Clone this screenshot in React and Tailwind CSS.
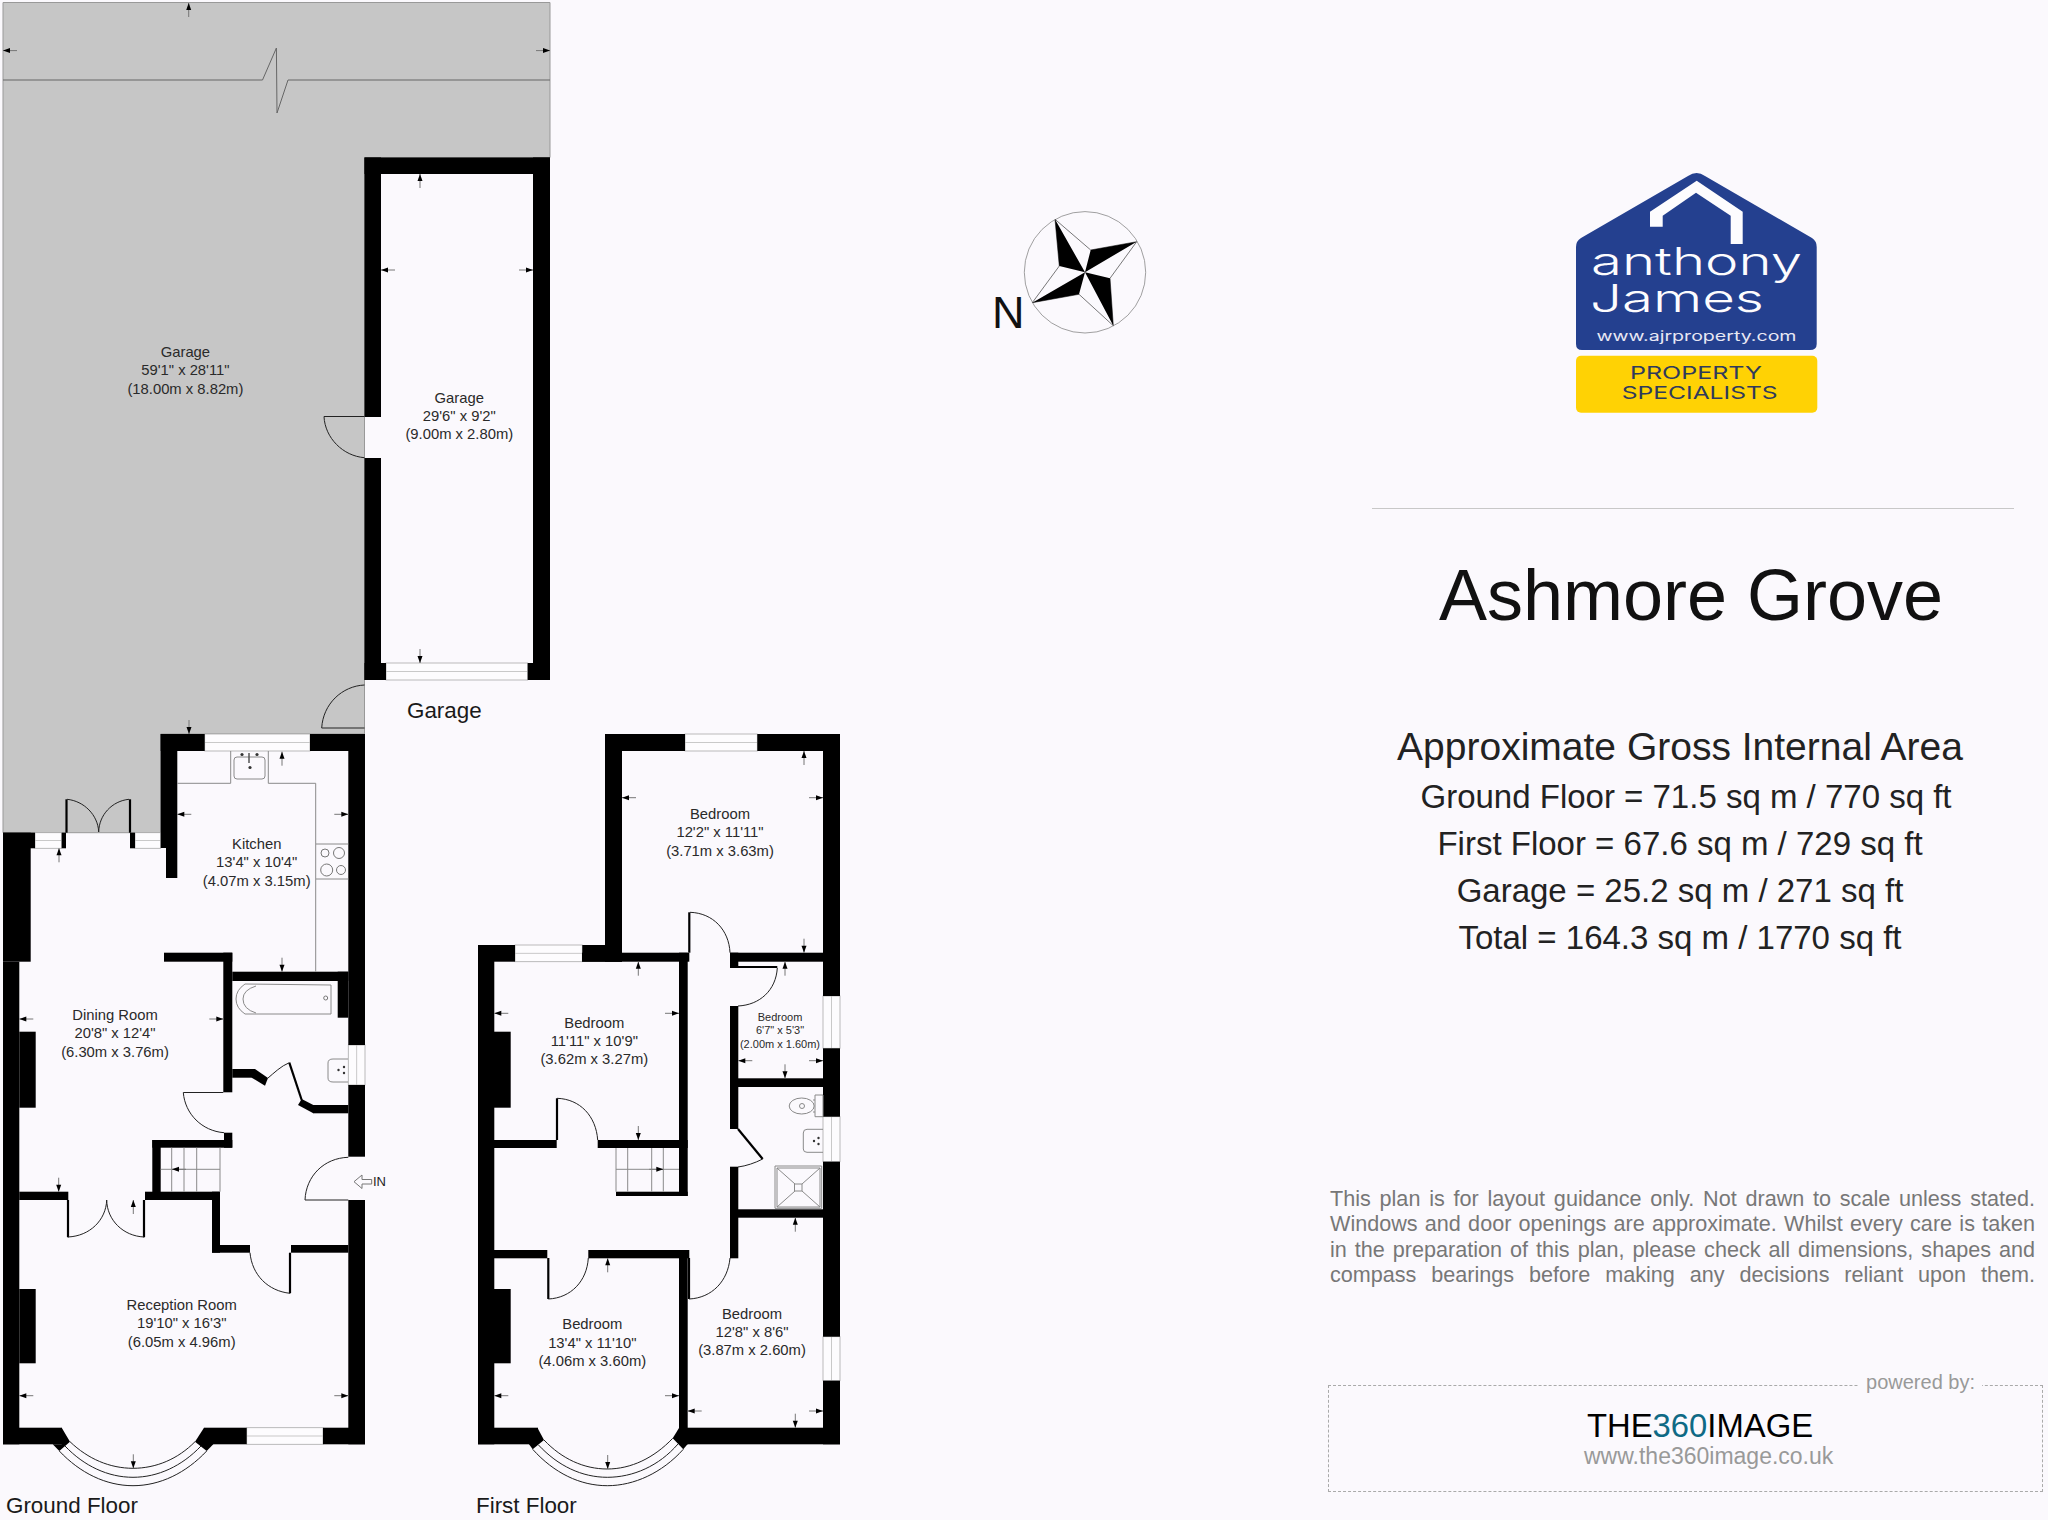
import React from "react";

// outer walls and partitions, [x1, y1, x2, y2]
const walls = [
  // detached garage
  [364.5, 157.5, 550, 174], [364.5, 157.5, 381, 417], [364.5, 458, 381, 680], [533, 157.5, 550, 680],
  [364.5, 663, 386, 680], [527.7, 663, 550, 680],
  // ground floor
  [160.7, 734, 204.7, 751], [310, 734, 365, 751], [160.7, 734, 177.3, 848], [166, 848, 177.3, 878],
  [348.3, 734, 365, 1045], [337.7, 971.7, 348.3, 1017.7], [232.3, 971.7, 348.3, 981],
  [3, 832.7, 35, 848.3], [3, 832.7, 30.7, 961.7], [3, 961.7, 19.3, 1444.3], [19.3, 1031.7, 35.7, 1107.7],
  [19.3, 1289, 35.7, 1363.3], [61.7, 832.7, 66, 848.3], [130, 832.7, 135, 848.3],
  [164, 952.7, 232.3, 961.7], [223.3, 952.7, 232.3, 1092.3], [232.3, 1069, 252, 1077.7],
  [313, 1105, 348.3, 1113.3], [348.3, 1085, 365, 1156.7], [348.3, 1200, 365, 1444.3],
  [224, 1132.7, 232.3, 1147.7], [152.3, 1140, 232.3, 1147.7], [152.3, 1140, 160.7, 1200],
  [145, 1191.7, 220, 1200], [212, 1191.7, 220, 1252.7], [212, 1245, 250, 1252.7], [291, 1245, 348.3, 1252.7],
  [19.3, 1191.7, 68.3, 1200], [3, 1427.7, 62, 1444.3], [204, 1427.7, 246.7, 1444.3], [323, 1427.7, 365, 1444.3],
  // first floor
  [605, 734, 685, 751], [757.3, 734, 840, 751], [605, 734, 622, 961.7], [823, 734, 840, 996],
  [823, 1048.3, 840, 1116.7], [823, 1161.7, 840, 1336.7], [823, 1380.7, 840, 1444.3],
  [478, 945, 515, 961.7], [582.3, 945, 622, 961.7], [478, 945, 494.3, 1444.3],
  [494, 1031.7, 510.7, 1107.7], [494, 1289, 510.7, 1363.3], [582, 952.7, 689.3, 961.7],
  [730, 952.7, 823, 961.7], [730, 952.7, 738.3, 968], [730, 1006, 738.3, 1129], [738, 1078.3, 823, 1087],
  [679, 952.7, 687.7, 1196], [616, 1191.7, 687.7, 1196], [494, 1140, 556.7, 1148], [597.7, 1140, 687.7, 1148],
  [494, 1250, 547.3, 1258.3], [588.3, 1250, 689.3, 1258.3], [679, 1250, 687.7, 1444.3],
  [730, 1166.7, 738.3, 1258.3], [738, 1209.3, 823, 1217.7], [478, 1427.7, 538, 1444.3], [686.7, 1427.7, 840, 1444.3],
];

// [x1, y1, x2, y2], lines run along the longer side
const windows = [
  [386, 663, 527.7, 680], [204.7, 734, 310, 751], [35, 832.7, 61.7, 848.3], [135, 832.7, 160.7, 848.3],
  [348.3, 1045, 365, 1085], [246.7, 1427.7, 323, 1444.3], [685, 734, 757.3, 751], [515, 945, 582.3, 961.7],
  [823, 996, 840, 1048.3], [823, 1116.7, 840, 1161.7], [823, 1336.7, 840, 1380.7],
];

// angled wall pieces and bay piers
const polys = [
  "251.7,1069 255,1069 268,1078 265,1085.7 251.7,1077.7",
  "298,1105 301.7,1099 313.3,1105 313.3,1113.3",
  "61.7,1427.7 70,1441.7 59.3,1451 52.7,1444.3 61.7,1444.3",
  "204,1427.7 213.3,1444.3 206.7,1451 195,1441.7",
  "537.7,1428.3 544,1440 532.7,1449.3 528.3,1443.3",
  "679,1428 687.7,1428 687.7,1444 683.3,1449.3 672.7,1438.3",
];

// thin arcs and door leaves
const doors = [
  "M324 416.5H364.5M324 416.5C325 438 343 456 364.5 457.7",
  "M321.7 728H364.5M321.7 728C323 704 342 686 364.5 685",
  "M183.3 1092.5H223.3M183.3 1092.5C185 1114 202 1131 224 1132.7",
  "M268 1078C274 1073 281 1066 289.3 1062.7",
  "M68 1237C90 1236 106 1220 106.7 1200M144 1237C123 1236 107 1220 106.7 1200",
  "M250 1252.7C252 1275 268 1291 290 1293.3",
  "M348.3 1157.3C324 1158 306 1176 305 1200H348.3",
  "M67 799.3C84 801 98 815 98.7 832M129 799.3C112 801 99 815 98.7 832",
  "M690 912.3C713 913 729 930 730 952.7",
  "M777.3 968C776 990 760 1005 738 1006",
  "M557 1098.3C580 1099 596 1116 597.7 1140",
  "M548.3 1299C571 1298 587 1281 588.3 1258",
  "M689 1299C712 1298 728 1281 730 1258",
  "M762.7 1159C755 1163 746 1166 738 1167",
  "M70 1441.7C88 1459 110 1468.3 133 1468.3C156 1468.3 178 1459 195 1441.7",
  "M65 1446C84 1466 108 1477.3 133 1477.3C158 1477.3 182 1466 201 1446",
  "M59.3 1451C80 1473 106 1485.7 133 1485.7C160 1485.7 186 1473 206.7 1451",
  "M544 1440C562 1459 584 1469 607.3 1469C631 1469 654 1458 672.7 1438.3",
  "M538.5 1445C558 1466 582 1477.3 607.3 1477.3C633 1477.3 659 1466 678 1444",
  "M532.7 1449.3C554 1473 580 1485.7 607.3 1485.7C634 1485.7 662 1473 683.3 1449.3",
];

const leaves = [
  [66.5, 799.3, 66.5, 832.7], [130, 799.3, 130, 832.7], [289.3, 1062.7, 301.7, 1100], [68, 1200, 68, 1237.3],
  [144, 1200, 144, 1237.3], [290, 1252.7, 290, 1293.3], [689.3, 912.3, 689.3, 952.7], [738, 967, 777.3, 967],
  [557, 1098.3, 557, 1140], [548.3, 1258, 548.3, 1299], [689, 1258, 689, 1299], [738, 1129, 762.7, 1159],
];

// gray fixture lines
const fixtures = [
  "M177.3 783.3H230.7M268.3 783.3H315.7V971.7M230.7 751V783.3M268.3 751V783.3",
  "M316 844H348.3M316 879H348.3",
  "M171.7 1147.7V1191.7M184 1147.7V1191.7M196.7 1147.7V1191.7M220 1147.7V1191.7M160.7 1169.3H220",
  "M616 1148V1191.7M627.7 1148V1191.7M651.7 1148V1191.7M663.3 1148V1191.7M616 1169.3H679",
  "M245 984L331 985V1014L245 1014Q236 1008 236 999Q236 990 245 984Z",
  "M256 986Q243 990 243 999Q243 1009 256 1013",
  "M348 1059H333Q328 1059 328 1063V1078Q328 1082 333 1082H348",
  "M823 1129.3H807Q803.3 1129.3 803.3 1133V1149Q803.3 1152.3 807 1152.3H823",
  "M775 1166H821.7V1208.3H775ZM777 1168H820V1207H777ZM777 1168L795 1184M820 1168L802 1184M777 1207L795 1191M820 1207L802 1191",
  "M794.5 1184H802V1191H794.5Z",
  "M815 1095H823V1116.7H815ZM813 1100H815M813 1112H815",
  "M234 760Q234 757 237 757H262Q265 757 265 760V776Q265 779 262 779H237Q234 779 234 776Z",
];

// tip sits on the wall, the tail runs back into the room
const arrows = [
  [188.7, 3, "u"], [3, 50.6, "l"], [550, 50.6, "r"], [420, 174, "u"], [381, 270, "l"], [533, 270, "r"], [420, 663, "d"],
  [189, 734, "d"], [282, 751.7, "u"], [282, 971.7, "d"], [177.3, 814.3, "l"], [348.3, 814.3, "r"],
  [59, 848.3, "u"], [19.3, 1019, "l"], [223.3, 1019, "r"], [58.7, 1191.7, "d"], [133.3, 1200, "u"],
  [172, 1169.3, "l"], [19.3, 1395.7, "l"], [348.3, 1395.7, "r"], [133.3, 1468.3, "d"],
  [804, 751, "u"], [622, 797.7, "l"], [823, 797.7, "r"], [804, 952.7, "d"],
  [638.3, 961.7, "u"], [494.3, 1013.3, "l"], [679, 1013.3, "r"], [638.3, 1140, "d"],
  [785, 961.7, "u"], [738.3, 1060.7, "l"], [823, 1060.7, "r"], [785, 1078.3, "d"],
  [795.3, 1217.7, "u"], [687.7, 1411, "l"], [823, 1411, "r"], [795.3, 1427.7, "d"],
  [607.7, 1258.3, "u"], [494.3, 1395.7, "l"], [679, 1395.7, "r"], [607.7, 1469, "d"], [663.3, 1169.3, "r"],
];

const rooms = [
  { x: 185.4, y: 357, lines: ["Garage", "59'1\" x 28'11\"", "(18.00m x 8.82m)"] },
  { x: 459.3, y: 402.7, lines: ["Garage", "29'6\" x 9'2\"", "(9.00m x 2.80m)"] },
  { x: 256.7, y: 849, lines: ["Kitchen", "13'4\" x 10'4\"", "(4.07m x 3.15m)"] },
  { x: 115, y: 1020, lines: ["Dining Room", "20'8\" x 12'4\"", "(6.30m x 3.76m)"] },
  { x: 181.7, y: 1310, lines: ["Reception Room", "19'10\" x 16'3\"", "(6.05m x 4.96m)"] },
  { x: 720, y: 819, lines: ["Bedroom", "12'2\" x 11'11\"", "(3.71m x 3.63m)"] },
  { x: 594.3, y: 1027.7, lines: ["Bedroom", "11'11\" x 10'9\"", "(3.62m x 3.27m)"] },
  { x: 592.3, y: 1329.3, lines: ["Bedroom", "13'4\" x 11'10\"", "(4.06m x 3.60m)"] },
  { x: 752, y: 1318.7, lines: ["Bedroom", "12'8\" x 8'6\"", "(3.87m x 2.60m)"] },
];

const disclaimer = [
  "This plan is for layout guidance only. Not drawn to scale unless stated.",
  "Windows and door openings are approximate. Whilst every care is taken",
  "in the preparation of this plan, please check all dimensions, shapes and",
  "compass bearings before making any decisions reliant upon them.",
];

function Arrow({ x, y, d }) {
  const dx = d === "l" ? 1 : d === "r" ? -1 : 0;
  const dy = d === "u" ? 1 : d === "d" ? -1 : 0;
  const px = dy * 2.5;
  const py = dx * 2.5;
  return (
    <g>
      <line x1={x} y1={y} x2={x + dx * 14} y2={y + dy * 14} stroke="#777" strokeWidth="1" />
      <polygon
        points={`${x},${y} ${x + dx * 7 + px},${y + dy * 7 + py} ${x + dx * 7 - px},${y + dy * 7 - py}`}
        fill="#000"
      />
    </g>
  );
}

function WindowFrame({ w }) {
  const [x1, y1, x2, y2] = w;
  const horizontal = x2 - x1 > y2 - y1;
  const mid = horizontal ? (y1 + y2) / 2 : (x1 + x2) / 2;
  return (
    <g>
      <rect x={x1} y={y1} width={x2 - x1} height={y2 - y1} fill="#fdfcfe" stroke="#aaa" strokeWidth="0.8" />
      {horizontal ? (
        <line x1={x1} y1={mid} x2={x2} y2={mid} stroke="#bbb" strokeWidth="0.8" />
      ) : (
        <line x1={mid} y1={y1} x2={mid} y2={y2} stroke="#bbb" strokeWidth="0.8" />
      )}
    </g>
  );
}

function Plan() {
  return (
    <svg viewBox="0 0 1328 1520" className="block w-[1328px] h-[1520px] shrink-0 font-['Liberation_Sans',sans-serif]">
      {/* garden */}
      <path d="M3 2.5H550V157.5H364.5V734H160.7V832.7H3Z" fill="#c6c6c6" stroke="#999" strokeWidth="1" />
      <path d="M3 80H262.5L276.4 48L277 113L288 80H550" fill="none" stroke="#666" strokeWidth="1" />

      {windows.map((w, i) => <WindowFrame key={i} w={w} />)}
      {walls.map((r, i) => (
        <rect key={i} x={r[0]} y={r[1]} width={r[2] - r[0]} height={r[3] - r[1]} fill="#000" />
      ))}
      {polys.map((p, i) => <polygon key={i} points={p} fill="#000" />)}
      {leaves.map((l, i) => (
        <line key={i} x1={l[0]} y1={l[1]} x2={l[2]} y2={l[3]} stroke="#000" strokeWidth="2.2" />
      ))}
      {doors.map((d, i) => <path key={i} d={d} fill="none" stroke="#222" strokeWidth="1" />)}
      {fixtures.map((d, i) => <path key={i} d={d} fill="none" stroke="#8a8a8a" strokeWidth="1" />)}

      {/* hob */}
      <g fill="none" stroke="#777" strokeWidth="1">
        <circle cx="325" cy="853" r="4" />
        <circle cx="339" cy="853" r="5.5" />
        <circle cx="326.7" cy="870" r="6" />
        <circle cx="341" cy="870" r="4.5" />
      </g>
      {/* sink taps, basin taps, bath overflow, toilet */}
      <g fill="#333">
        <circle cx="242" cy="754.5" r="1.6" />
        <circle cx="257" cy="754.5" r="1.6" />
        <circle cx="250" cy="767.5" r="1.6" />
        <circle cx="338.5" cy="1070" r="1.2" />
        <circle cx="344" cy="1067" r="1.2" />
        <circle cx="344" cy="1073" r="1.2" />
        <circle cx="814" cy="1141" r="1.2" />
        <circle cx="818.5" cy="1138" r="1.2" />
        <circle cx="818.5" cy="1144" r="1.2" />
      </g>
      <path d="M249 753V763" stroke="#555" strokeWidth="1.5" />
      <circle cx="325.7" cy="998" r="2" fill="none" stroke="#777" />
      <ellipse cx="801.7" cy="1106" rx="12.5" ry="8" fill="none" stroke="#888" />
      <circle cx="802" cy="1106" r="2.5" fill="none" stroke="#888" />

      {arrows.map((a, i) => <Arrow key={i} x={a[0]} y={a[1]} d={a[2]} />)}

      {/* front door marker */}
      <path d="M354 1181.7L362 1175V1179.5H371.7V1184H362V1188.5Z" fill="none" stroke="#777" strokeWidth="1" />
      <text x="373" y="1186" fill="#222" className="text-[13px]">IN</text>

      {rooms.map((room, i) => (
        <text key={i} textAnchor="middle" fill="#2a2a2a" className="text-[14.8px]">
          {room.lines.map((line, j) => (
            <tspan key={j} x={room.x} y={room.y + j * 18.3}>{line}</tspan>
          ))}
        </text>
      ))}
      <text textAnchor="middle" fill="#2a2a2a" className="text-[11px]">
        <tspan x="780" y="1021">Bedroom</tspan>
        <tspan x="780" y="1034.3">6'7" x 5'3"</tspan>
        <tspan x="780" y="1047.7">(2.00m x 1.60m)</tspan>
      </text>

      <text x="407" y="718" fill="#1a1a1a" className="text-[22.4px]">Garage</text>
      <text x="6" y="1512.7" fill="#1a1a1a" className="text-[22.4px]">Ground Floor</text>
      <text x="476" y="1512.7" fill="#1a1a1a" className="text-[22.4px]">First Floor</text>

      {/* compass */}
      <circle cx="1085" cy="272.3" r="60.7" fill="none" stroke="#888" strokeWidth="0.8" />
      <path d="M1055 219.3L1090.7 250L1136.7 241.7L1110 278.3L1113.3 325.7L1079 294.3L1032.3 302.7L1059.3 266Z" fill="none" stroke="#555" strokeWidth="0.8" />
      <path d="M1055 219.3L1059.3 266L1085 272.3ZM1136.7 241.7L1090.7 250L1085 272.3ZM1113.3 325.7L1110 278.3L1085 272.3ZM1032.3 302.7L1079 294.3L1085 272.3Z" fill="#000" />
      <text x="992" y="328" fill="#111" className="text-[45px]">N</text>
    </svg>
  );
}

function Logo() {
  return (
    <svg viewBox="1576 172 242 241" className="block w-[242px] h-[241px] ml-[248px] font-['Inter',sans-serif]">
      <path
        d="M1688 176Q1696.7 170 1705 176L1812 238Q1816.7 241 1816.7 247V344Q1816.7 350 1810 350H1582Q1576 350 1576 344V247Q1576 241 1581 238Z"
        fill="#24408f"
      />
      <path
        d="M1650 211.7L1696.7 180.7L1742.7 211.7V244H1730.7V215.7L1696 192.7L1662.7 215.7V226.7H1650Z"
        fill="#fdfcfe"
      />
      <text x="1591" y="275" fill="#fdfcfe" textLength="211" lengthAdjust="spacingAndGlyphs" className="text-[38px] font-light">anthony</text>
      <text x="1590" y="311.7" fill="#fdfcfe" textLength="174" lengthAdjust="spacingAndGlyphs" className="text-[38px] font-light">James</text>
      <text x="1596.5" y="340.5" fill="#e8e8f4" textLength="200" lengthAdjust="spacingAndGlyphs" className="text-[14px]">www.ajrproperty.com</text>
      <rect x="1576" y="355.7" width="241.3" height="57" rx="5" fill="#ffd204" />
      <text x="1630" y="379.3" fill="#2f3a5c" textLength="132" lengthAdjust="spacingAndGlyphs" className="text-[17px]">PROPERTY</text>
      <text x="1621.7" y="399.3" fill="#2f3a5c" textLength="156" lengthAdjust="spacingAndGlyphs" className="text-[17px]">SPECIALISTS</text>
    </svg>
  );
}

export default function App() {
  const areas = [
    { text: "Ground Floor = 71.5 sq m / 770 sq ft", indent: "pl-[12px]" },
    { text: "First Floor = 67.6 sq m / 729 sq ft", indent: "" },
    { text: "Garage = 25.2 sq m / 271 sq ft", indent: "" },
    { text: "Total = 164.3 sq m / 1770 sq ft", indent: "" },
  ];

  return (
    <div className="flex w-[2048px] h-[1520px] overflow-hidden bg-[#fbf9fd] font-['Liberation_Sans',sans-serif]">
      <Plan />

      <div className="flex flex-col w-[720px] pt-[172px]">
        <Logo />
        <div className="ml-[44px] mt-[95px] w-[642px] h-px bg-[#c8c8c8]" />

        <h1 className="mt-[46px] pl-[6px] text-center text-[72px] leading-[80px] font-normal text-[#111]">Ashmore Grove</h1>

        <div className="mt-[86px] pr-[16px] text-center text-[#222]">
          <p className="text-[39px] leading-[51px] mb-[1px]">Approximate Gross Internal Area</p>
          {areas.map((line) => (
            <p key={line.text} className={`text-[33px] leading-[47px] ${line.indent}`}>{line.text}</p>
          ))}
        </div>

        <div className="mt-[225px] ml-[2px] w-[705px] text-[21.6px] leading-[25.4px] text-[#777]">
          {disclaimer.map((line) => (
            <p key={line} className="text-justify [text-align-last:justify]">{line}</p>
          ))}
        </div>

        <div className="relative mt-[97px] w-[715px] h-[107px] border border-dashed border-[#aaa] pt-[22px] pl-[258px]">
          <span className="absolute -top-[17px] right-[60px] bg-[#fbf9fd] px-[7px] text-[20px] leading-[26px] text-[#999]">powered by:</span>
          <div className="text-[32.8px] leading-[36px] text-black">
            THE<span className="text-[#0f6a85]">360</span>IMAGE
          </div>
          <div className="-ml-[3px] -mt-[1px] text-[23px] leading-[26px] text-[#999]">www.the360image.co.uk</div>
        </div>
      </div>
    </div>
  );
}
